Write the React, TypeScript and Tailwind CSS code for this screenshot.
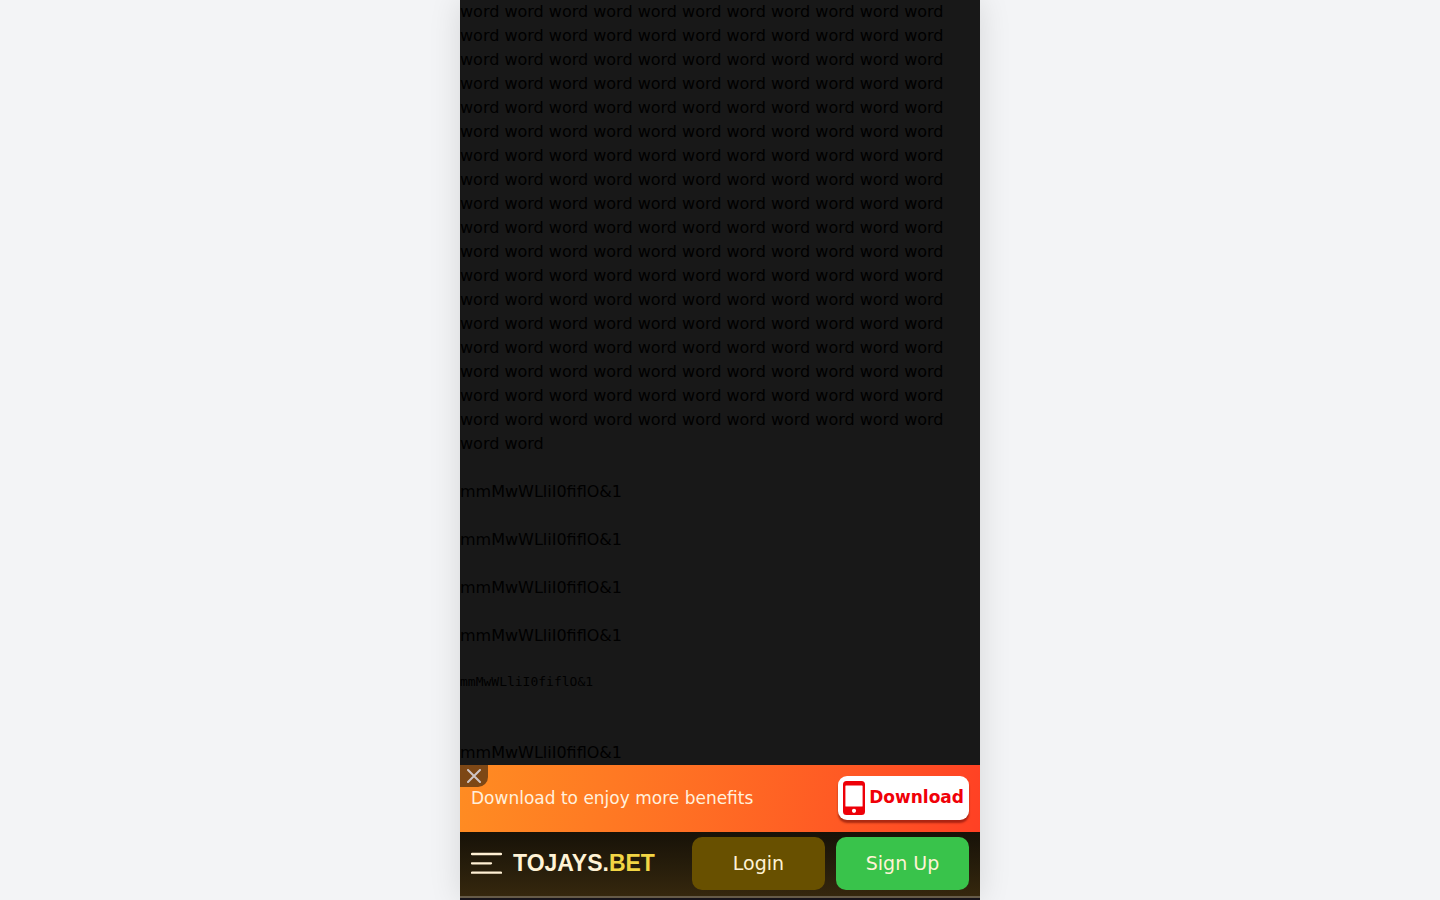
import React from "react";

const words = Array.from({ length: 200 }, () => "word").join(" ");
const sample = "mmMwWLliI0fiflO&1";

const PhoneIcon: React.FC = () => (
  <svg
    className="h-[34px] w-[22px] shrink-0"
    viewBox="0 0 22 34"
    aria-hidden="true"
  >
    <path
      fill="#ee0008"
      fillRule="evenodd"
      d="M3.5 0h15A3.5 3.5 0 0 1 22 3.5v27a3.5 3.5 0 0 1-3.5 3.5h-15A3.5 3.5 0 0 1 0 30.5v-27A3.5 3.5 0 0 1 3.5 0zM3 4.500a.6.6 0 0 0-.6.6v19.800a.6.6 0 0 0 .6.6h16a.6.6 0 0 0 .6-.6V5.100a.6.6 0 0 0-.6-.6zM11 27.700a2.100 2.100 0 1 0 0 4.200 2.100 2.100 0 0 0 0-4.200z"
    />
  </svg>
);

const DownloadBanner: React.FC = () => (
  <div className="relative flex h-[67px] items-center justify-between bg-linear-100 from-[#ff8c22] to-[#ff4024] px-[11px] pb-0.5">
    <button
      type="button"
      aria-label="Close"
      className="absolute top-0 left-0 flex h-[22px] w-7 items-center justify-center rounded-br-[10px] bg-[#7d4715]"
    >
      <svg className="size-[14px]" viewBox="0 0 14 14" aria-hidden="true">
        <path
          d="M1 1l12 12M13 1L1 13"
          stroke="#cfc5c5"
          strokeWidth="2"
          strokeLinecap="round"
        />
      </svg>
    </button>
    <p className="text-[17px] leading-6 text-[#fff0dc]">
      Download to enjoy more benefits
    </p>
    <button
      type="button"
      className="flex h-11 items-center gap-1 rounded-[9px] bg-white px-[5px] text-[17px] font-bold text-[#f00008] shadow-[0_3px_2px_rgba(90,0,0,0.5)]"
    >
      <PhoneIcon />
      Download
    </button>
  </div>
);

const Header: React.FC = () => (
  <header className="flex h-16 items-center justify-between bg-linear-to-b from-[#171208] to-[#35270d] px-[11px] pb-0.5">
    <div className="flex items-center gap-[11px]">
      <button type="button" aria-label="Menu">
        <svg className="h-[22px] w-[31px]" viewBox="0 0 31 22" aria-hidden="true">
          <path
            d="M1 2h29M1 11.300h19M1 20.700h29"
            stroke="#fff0d4"
            strokeWidth="2.300"
            strokeLinecap="round"
          />
        </svg>
      </button>
      <a
        href="#"
        className="font-['Liberation_Sans',Arial,sans-serif] text-[23px] leading-8 font-bold text-[#fff3d6]"
      >
        TOJAYS.<span className="text-[#f2d544]">BET</span>
      </a>
    </div>
    <div className="flex gap-[11px] text-[19px] text-[#fff3d6]">
      <button type="button" className="h-[53px] w-[133px] rounded-[10px] bg-[#685000]">
        Login
      </button>
      <button type="button" className="h-[53px] w-[133px] rounded-[10px] bg-[#39c34b]">
        Sign Up
      </button>
    </div>
  </header>
);

const App: React.FC = () => {
  return (
    <div className="h-screen bg-[#f3f4f6] font-['DejaVu_Sans',sans-serif]">
      <div className="mx-auto flex h-full max-w-[520px] flex-col bg-[#181818] shadow-[0_0_30px_rgba(0,0,0,0.12)]">
        <main className="min-h-0 flex-1 overflow-hidden text-base text-black">
          <p>{words}</p>
          <div className="mt-6 flex flex-col gap-6">
            <p>{sample}</p>
            <p>{sample}</p>
            <p>{sample}</p>
            <p>{sample}</p>
          </div>
          <p className="mt-6 font-['DejaVu_Sans_Mono',monospace] text-[13px] leading-5">
            {sample}
          </p>
          <p className="mt-[49px]">{sample}</p>
        </main>
        <DownloadBanner />
        <Header />
        <div className="h-1 border-t-2 border-[#665b48] bg-[#17141a]" />
      </div>
    </div>
  );
};

export default App;
